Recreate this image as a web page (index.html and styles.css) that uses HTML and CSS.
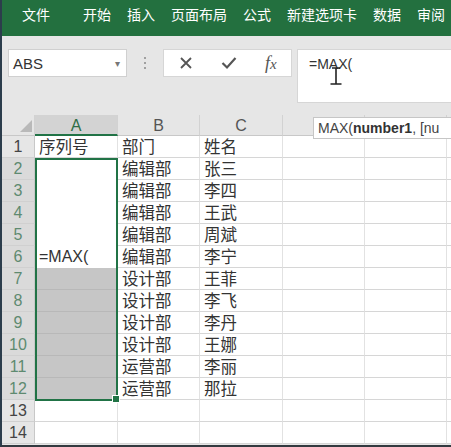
FILE: index.html
```html
<!DOCTYPE html>
<html lang="zh">
<head>
<meta charset="utf-8">
<link rel="stylesheet" href="styles.css">
</head>
<body>
<div class="app">
  <div class="ribbon">
    <span class="tab first">文件</span>
    <span class="tab">开始</span>
    <span class="tab">插入</span>
    <span class="tab">页面布局</span>
    <span class="tab">公式</span>
    <span class="tab">新建选项卡</span>
    <span class="tab">数据</span>
    <span class="tab">审阅</span>
  </div>
  <div class="fbar">
    <div class="namebox"><span>ABS</span><span class="arrow">&#9662;</span></div>
    <div class="dots"><i></i><i></i><i></i></div>
    <div class="btnbox">
      <svg class="ico" width="14" height="14" viewBox="0 0 14 14"><path d="M2 2 L12 12 M12 2 L2 12" stroke="#555" stroke-width="1.8" fill="none"/></svg>
      <svg class="ico" width="16" height="14" viewBox="0 0 16 14"><path d="M1.5 7 L6 11.5 L14.5 2" stroke="#555" stroke-width="2.2" fill="none"/></svg>
      <span class="fx"><span class="f">f</span>x</span>
    </div>
    <div class="finput">
      <span class="ftext">=MAX(</span>
      <svg class="ibeam" width="12" height="18" viewBox="0 0 12 18"><path d="M2 1 H10 M6 1 V17 M0.5 17 H11.5" stroke="#222" stroke-width="1.6" fill="none"/></svg>
    </div>
  </div>
  <div class="sheet">
    <div class="grid">
      <div class="ch corner"><svg width="12" height="12" viewBox="0 0 12 12"><path d="M12 0 V12 H0 Z" fill="#b9b9b9"/></svg></div>
      <div class="ch sel">A</div><div class="ch">B</div><div class="ch">C</div><div class="ch"></div><div class="ch"></div><div class="ch"></div>

      <div class="rh">1</div><div class="c">序列号</div><div class="c">部门</div><div class="c">姓名</div><div class="c"></div><div class="c"></div><div class="c"></div>
      <div class="rh rs">2</div><div class="c act"></div><div class="c">编辑部</div><div class="c">张三</div><div class="c"></div><div class="c"></div><div class="c"></div>
      <div class="rh rs">3</div><div class="c act"></div><div class="c">编辑部</div><div class="c">李四</div><div class="c"></div><div class="c"></div><div class="c"></div>
      <div class="rh rs">4</div><div class="c act"></div><div class="c">编辑部</div><div class="c">王武</div><div class="c"></div><div class="c"></div><div class="c"></div>
      <div class="rh rs">5</div><div class="c act"></div><div class="c">编辑部</div><div class="c">周斌</div><div class="c"></div><div class="c"></div><div class="c"></div>
      <div class="rh rs">6</div><div class="c act">=MAX(</div><div class="c">编辑部</div><div class="c">李宁</div><div class="c"></div><div class="c"></div><div class="c"></div>
      <div class="rh rs">7</div><div class="c gray"></div><div class="c">设计部</div><div class="c">王菲</div><div class="c"></div><div class="c"></div><div class="c"></div>
      <div class="rh rs">8</div><div class="c gray"></div><div class="c">设计部</div><div class="c">李飞</div><div class="c"></div><div class="c"></div><div class="c"></div>
      <div class="rh rs">9</div><div class="c gray"></div><div class="c">设计部</div><div class="c">李丹</div><div class="c"></div><div class="c"></div><div class="c"></div>
      <div class="rh rs">10</div><div class="c gray"></div><div class="c">设计部</div><div class="c">王娜</div><div class="c"></div><div class="c"></div><div class="c"></div>
      <div class="rh rs">11</div><div class="c gray"></div><div class="c">运营部</div><div class="c">李丽</div><div class="c"></div><div class="c"></div><div class="c"></div>
      <div class="rh rs">12</div><div class="c gray"></div><div class="c">运营部</div><div class="c">那拉</div><div class="c"></div><div class="c"></div><div class="c"></div>
      <div class="rh">13</div><div class="c"></div><div class="c"></div><div class="c"></div><div class="c"></div><div class="c"></div><div class="c"></div>
      <div class="rh">14</div><div class="c"></div><div class="c"></div><div class="c"></div><div class="c"></div><div class="c"></div><div class="c"></div>
    </div>
    <div class="selection"><span class="handle"></span></div>
    <div class="tip">MAX(<b>number1</b>, [nu</div>
  </div>
</div>
</body>
</html>
```
FILE: styles.css
```css
html, body {
  margin: 0;
  padding: 0;
  background: #e6e6e6;
}
.app {
  width: 451px;
  height: 447px;
  overflow: hidden;
  box-sizing: border-box;
  border-left: 2px solid #2c3d4c;
  border-bottom: 2px solid #333a40;
  font-family: "Liberation Sans", "Noto Sans CJK SC", sans-serif;
  background: #e6e6e6;
}
.ribbon {
  height: 36px;
  background: #23703f;
  display: flex;
  align-items: flex-start;
  padding-left: 20px;
  gap: 16px;
  color: #fff;
  font-family: "Noto Sans CJK SC", sans-serif;
  font-size: 14px;
  line-height: 28px;
}
.tab.first { margin-right: 17px; }
.fbar {
  height: 79px;
  box-sizing: border-box;
  padding-top: 13px;
  padding-left: 6px;
  display: flex;
  align-items: flex-start;
}
.namebox {
  width: 119px;
  height: 28px;
  box-sizing: border-box;
  background: #fff;
  border: 1px solid #d0d0d0;
  display: flex;
  align-items: center;
  justify-content: space-between;
  padding: 0 6px 0 4px;
  font-size: 15px;
  color: #333;
}
.namebox .arrow { font-size: 10px; color: #777; }
.dots {
  width: 36px;
  height: 28px;
  display: flex;
  flex-direction: column;
  align-items: center;
  justify-content: center;
  gap: 3px;
}
.dots i {
  display: block;
  width: 2px;
  height: 2px;
  background: #a0a0a0;
}
.btnbox {
  width: 129px;
  height: 28px;
  box-sizing: border-box;
  background: #fff;
  border: 1px solid #d6d6d6;
  display: flex;
  align-items: center;
  padding-left: 15px;
  gap: 28px;
}
.fx {
  font-family: "Liberation Serif", serif;
  font-style: italic;
  font-size: 15px;
  color: #555;
}
.fx .f { font-size: 18px; }
.finput {
  margin-left: 5px;
  flex: 1;
  height: 52px;
  background: #fff;
  border: 1px solid #d6d6d6;
  border-right: none;
  position: relative;
  padding-left: 11px;
  font-size: 14px;
  line-height: 28px;
  color: #333;
}
.ibeam {
  position: absolute;
  left: 32px;
  top: 17px;
}
.sheet {
  position: relative;
  background: #fff;
}
.grid {
  display: grid;
  grid-template-columns: 33px 83px 82px 83px 82px 82px 1fr;
  grid-template-rows: 21px repeat(14, 22px);
}
.ch {
  background: #e6e6e6;
  border-right: 1px solid #d2d2d2;
  border-bottom: 1px solid #c8c8c8;
  box-sizing: border-box;
  text-align: center;
  font-size: 16px;
  line-height: 21px;
  color: #555;
}
.ch.sel {
  background: #d3d3d3;
  color: #2f6e46;
  border-bottom: 2px solid #217346;
}
.ch.corner {
  display: flex;
  align-items: flex-end;
  justify-content: flex-end;
  padding: 0 2px 3px 0;
}
.rh {
  background: #e6e6e6;
  border-right: 1px solid #c8c8c8;
  border-bottom: 1px solid #d0d0d0;
  box-sizing: border-box;
  text-align: center;
  font-size: 16px;
  line-height: 22px;
  color: #444;
}
.rh.rs {
  background: #dadada;
  color: #5e8a70;
}
.c {
  box-sizing: border-box;
  border-right: 1px solid #e2e2e2;
  border-bottom: 1px solid #d6d6d6;
  padding-left: 4px;
  font-family: "Noto Sans CJK SC", sans-serif;
  font-size: 16.5px;
  line-height: 21px;
  color: #333;
  white-space: nowrap;
}
.c.act {
  border-bottom-color: #fff;
  font-family: "Liberation Sans", sans-serif;
  font-size: 16px;
}
.c.gray {
  background: #c6c6c6;
  border-bottom-color: #b8b8b8;
}
.selection {
  position: absolute;
  left: 33px;
  top: 43px;
  width: 83px;
  height: 243px;
  box-sizing: border-box;
  border: 2px solid #217346;
}
.handle {
  position: absolute;
  right: -4px;
  bottom: -4px;
  width: 6px;
  height: 6px;
  background: #217346;
  border: 1px solid #fff;
}
.tip {
  position: absolute;
  left: 311px;
  top: 2px;
  width: 160px;
  height: 22px;
  box-sizing: border-box;
  background: #fff;
  border: 1px solid #c6c6c6;
  padding-left: 4px;
  font-size: 14px;
  line-height: 20px;
  color: #444;
  white-space: nowrap;
}
.tip b { color: #333; }
```
